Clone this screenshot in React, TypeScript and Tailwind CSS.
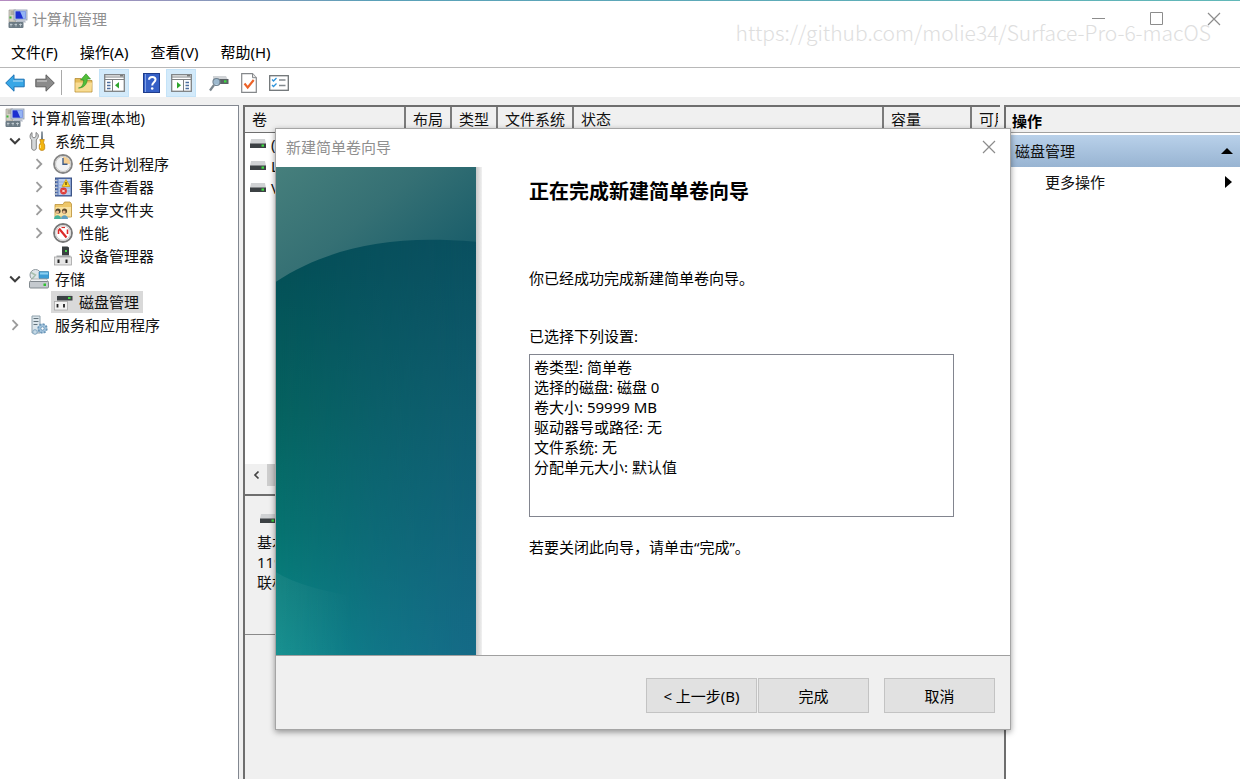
import type { ReactNode } from 'react';

const ComputerIcon = () => (
  <svg width="20" height="20" viewBox="0 0 20 20">
    <path d="M1 1h7v12H1z" fill="#d5d2c6" stroke="#8f8c83" strokeWidth=".6" />
    <path d="M2.5 3h3.5M2.5 5h3.5" stroke="#8a8a80" />
    <rect x="1.5" y="7.5" width="2" height="2" fill="#3fb53a" />
    <rect x="6" y="1" width="13" height="10" fill="#c7d4e6" stroke="#8a97ab" strokeWidth=".8" />
    <rect x="7.5" y="2.3" width="10" height="7.4" fill="#1c2fd0" />
    <path d="M12 2.3h5.5v7.4h-2.2z" fill="#93b4f4" />
    <path d="M9 11.5h8l1 2H8z" fill="#b5bcc7" />
    <rect x=".5" y="13" width="15" height="6" rx="1" fill="#6c7b85" />
    <path d="M2 15.5h2.5M6.500 15.500H9M11 15.500h3M3 14.500v3M8 14.500v3M12.500 14.500v3" stroke="#c9d3d8" strokeWidth=".8" />
  </svg>
);

const ToolsIcon = () => (
  <svg width="20" height="20" viewBox="0 0 20 20">
    <path d="M3 1.500v4l2 1.500 2-1.500v-4c2 1 3 3 2 5-.4 1-1.500 1.800-1.700 2.500V17c0 3-4.600 3-4.600 0V9C.5 7.500.5 3 3 1.500z" fill="#d5d8da" stroke="#777" strokeWidth=".9" />
    <path d="M12.300 0.500h1.400l.3 8h-2z" fill="#6c7a85" />
    <path d="M10.800 8.500h4.500l-.8 3.200 1.200 2.300v3.500c0 2.500-5.400 2.500-5.400 0V14l1.300-2.300z" fill="#f2b50f" stroke="#b77a08" strokeWidth=".7" />
    <path d="M11.500 14v3" stroke="#ffe37c" />
  </svg>
);

const ClockIcon = () => (
  <svg width="20" height="20" viewBox="0 0 20 20">
    <circle cx="10" cy="10" r="9" fill="#f6f4ee" stroke="#858585" strokeWidth="1.800" />
    <circle cx="10" cy="10" r="7.500" fill="#f2f3f4" stroke="#c7c7c7" />
    <path d="M10 10V2.700A7.300 7.300 0 0 1 17.300 10z" fill="#f6cf92" />
    <path d="M10 4v6.300h4.500" fill="none" stroke="#3f5c88" strokeWidth="1.400" />
  </svg>
);

const EventIcon = () => (
  <svg width="20" height="20" viewBox="0 0 20 20">
    <rect x="2.500" y="1" width="16" height="18" fill="#5574b5" stroke="#3d5487" />
    <rect x="5.500" y="2" width="12" height="16" fill="#b9cbeb" />
    <path d="M6 5h11M6 8h11M6 11h11M6 14h11" stroke="#8ba5d6" strokeWidth=".8" />
    <path d="M1.500 3.500h3M1.500 7h3M1.500 10.500h3M1.500 14h3M1.500 17h3" stroke="#c5c9d0" strokeWidth="1.300" />
    <path d="M13 2.500l4 7H9z" fill="#ffd52e" stroke="#c79c0c" strokeWidth=".7" />
    <path d="M13 5v3" stroke="#4a3a00" strokeWidth="1.200" />
    <circle cx="10.500" cy="14" r="3.400" fill="#de3a36" />
    <path d="M9.300 12.800l2.400 2.400m0-2.400l-2.400 2.400" stroke="#fff" />
  </svg>
);

const SharedFolderIcon = () => (
  <svg width="20" height="20" viewBox="0 0 20 20">
    <path d="M2 4.500h8l1.500-2.500H17l1.500 2V17H2z" fill="#eec769" stroke="#bb9238" strokeWidth=".8" />
    <path d="M2.500 7h15.500v9.500H2.500z" fill="#fae2a0" />
    <circle cx="5" cy="11" r="2.600" fill="#4b4436" />
    <circle cx="4.500" cy="12" r="1.600" fill="#eab98c" />
    <circle cx="11.500" cy="11" r="2.600" fill="#5f4a2e" />
    <circle cx="11" cy="12" r="1.600" fill="#eab98c" />
    <path d="M1 19c0-5 7-5 7 0z" fill="#46b39a" />
    <path d="M8 19c0-5 7-5 7 0z" fill="#5f9fc0" />
  </svg>
);

const GaugeIcon = () => (
  <svg width="20" height="20" viewBox="0 0 20 20">
    <circle cx="10" cy="10" r="9" fill="#fff" stroke="#777" strokeWidth="1.800" />
    <circle cx="10" cy="10" r="7.300" fill="none" stroke="#c9c9c9" />
    <path d="M5.500 11V6.500M14.500 11V6.500" fill="none" stroke="#dc2a28" strokeWidth="1.600" />
    <path d="M6 5.500l7.500 9" stroke="#dc2a28" strokeWidth="2.200" />
    <path d="M8.500 4.500h3.500" stroke="#dc2a28" strokeWidth="1.200" />
  </svg>
);

const DeviceIcon = () => (
  <svg width="20" height="20" viewBox="0 0 20 20">
    <path d="M9 .5h5.500l1.500 1v8H9z" fill="#3a3f41" />
    <rect x="12" y="4" width="2" height="2" fill="#45d84a" />
    <path d="M3.500 9.500h14v2h-14z" fill="#a6aaad" />
    <rect x="1.500" y="11" width="17" height="8" fill="#e5e5e5" stroke="#a4a4a4" strokeWidth=".8" />
    <path d="M5.500 13.500v3.500M13.500 13.500v3.500" stroke="#222" strokeWidth="2" />
  </svg>
);

const StorageIcon = () => (
  <svg width="20" height="20" viewBox="0 0 20 20">
    <circle cx="6.500" cy="6" r="5.500" fill="#dfe5e9" stroke="#8d979d" />
    <path d="M2 3.500l4.500 2.500L3 10" fill="none" stroke="#a7bfae" strokeWidth="1.500" />
    <rect x="10" y="2.500" width="10" height="7" rx="1" fill="#3d9dd5" stroke="#347aa1" strokeWidth=".6" />
    <path d="M11 3.500h8v2h-8z" fill="#8dd0f1" />
    <path d="M2.500 10h15l2 3H.5z" fill="#edf0f2" stroke="#999" strokeWidth=".6" />
    <rect x=".5" y="12.500" width="19" height="6.500" rx="1" fill="#c4c9ce" stroke="#777f85" strokeWidth=".9" />
    <rect x="14.500" y="14.500" width="2.500" height="2.500" fill="#2fc12f" />
  </svg>
);

const DiskMgmtIcon = () => (
  <svg width="20" height="20" viewBox="0 0 20 20">
    <path d="M6 2.500h12l1.500 2H4.500z" fill="#c7c9cb" />
    <rect x="4" y="4" width="15.500" height="4.500" fill="#3c4144" />
    <rect x="15" y="5" width="2.500" height="2" fill="#41dc43" />
    <rect x="1.500" y="9.500" width="13" height="8.500" fill="#f3f3f3" stroke="#a8a8a8" strokeWidth=".8" />
    <path d="M4.500 12v3.500M11 12v3.500" stroke="#222" strokeWidth="1.800" />
  </svg>
);

const ServicesIcon = () => (
  <svg width="20" height="20" viewBox="0 0 20 20">
    <path d="M3 1h8v17H3z" fill="#dce6ec" stroke="#8fa1ac" />
    <path d="M4.500 3.500h5M4.500 6.500h5M4.500 9.500h4" stroke="#62727b" strokeWidth="1.200" />
    <circle cx="13.500" cy="13.500" r="4.300" fill="#a6c7e0" stroke="#6a96b8" strokeWidth="1.800" strokeDasharray="2.200 1.100" />
    <circle cx="13.500" cy="13.500" r="1.700" fill="#fff" stroke="#6a96b8" />
    <circle cx="6" cy="17" r="2.300" fill="#c5d9e6" stroke="#7fa3bd" />
  </svg>
);

const DriveIcon = () => (
  <svg width="16" height="10" viewBox="0 0 16 10">
    <path d="M1 0h14l1 5H0z" fill="#d0d2d4" />
    <rect y="4.500" width="16" height="4.500" fill="#3c4144" />
    <rect x="11.500" y="5.500" width="2.500" height="2.200" fill="#3ddc41" />
  </svg>
);

const ArrowIcon = ({ flip = false }: { flip?: boolean }) => (
  <svg width="20" height="18" viewBox="0 0 20 18">
    {flip ? (
      <path d="M19.300 9L11 .8v4.400H.8v7.600H11v4.400z" fill="#8b8b8b" stroke="#5e5e5e" strokeWidth="1" />
    ) : (
      <path d="M.7 9L9 .8v4.400h10.200v7.600H9v4.400z" fill="#38a7e6" stroke="#1b71b4" strokeWidth="1" />
    )}
    <path d={flip ? 'M2 7h10' : 'M8 7h10'} stroke="#fff" strokeOpacity=".45" strokeWidth="1.500" />
  </svg>
);

const FolderUpIcon = () => (
  <svg width="20" height="20" viewBox="0 0 20 20">
    <path d="M1 5.500h6l1.500 2H18V19H1z" fill="#e6bd5b" stroke="#b48d35" strokeWidth=".8" />
    <path d="M1.500 9.500H18l-.5 9h-16z" fill="#f8dc93" />
    <path d="M4.500 15c3-.5 5-3 5.200-8H6.500L12 .8 16.500 6h-3.200c-.3 6-4 9-8.800 9z" fill="#52bf3a" stroke="#2c8a20" strokeWidth=".6" />
  </svg>
);

const PaneIcon = ({ flip = false }: { flip?: boolean }) => (
  <svg width="21" height="18" viewBox="0 0 21 18">
    <rect x=".7" y=".7" width="19.600" height="16.600" fill="#fff" stroke="#7d8083" strokeWidth="1.300" />
    <path d="M1 3h19M1 5.500h19" stroke="#7d8083" />
    <path d="M16 1.800h3" stroke="#555" />
    {flip ? (
      <>
        <path d="M12.500 6v11" stroke="#7d8083" />
        <path d="M14.500 8.500H18M14.500 11.500H18M14.500 14.500H18" stroke="#4d6e9e" strokeWidth="1.300" />
        <path d="M6 8v6.500l4-3.250z" fill="#2ea52c" />
      </>
    ) : (
      <>
        <path d="M8.500 6v11" stroke="#7d8083" />
        <path d="M3 8.500h3.500M3 11.500h3.500M3 14.500h3.500" stroke="#4d6e9e" strokeWidth="1.300" />
        <path d="M15 8v6.500l-4-3.250z" fill="#2ea52c" />
      </>
    )}
  </svg>
);

const HelpIcon = () => (
  <svg width="17" height="20" viewBox="0 0 17 20">
    <rect x=".5" y=".5" width="16" height="19" fill="#3560c6" stroke="#1e3c8c" />
    <path d="M2.500 1v18" stroke="#7f9fe6" />
    <path d="M6 6.800c0-4 6.500-3.700 6.500-.3 0 2.700-3.300 2.700-3.300 6" fill="none" stroke="#fff" strokeWidth="2" />
    <circle cx="9.200" cy="15.500" r="1.300" fill="#fff" />
  </svg>
);

const RescanIcon = () => (
  <svg width="20" height="18" viewBox="0 0 20 18">
    <path d="M4 2h13l2 4H4z" fill="#d0d3d6" />
    <rect x="5" y="5" width="14.500" height="5" fill="#5b6165" />
    <rect x="15" y="6.300" width="2.500" height="2.200" fill="#3ddc41" />
    <circle cx="7.500" cy="8" r="3.500" fill="#a9c9e0" fillOpacity=".85" stroke="#708290" strokeWidth="1.200" />
    <path d="M5 11L1 16.500" stroke="#7a868e" strokeWidth="2.200" />
  </svg>
);

const CheckDocIcon = () => (
  <svg width="16" height="20" viewBox="0 0 16 20">
    <path d="M.7.700h10.800l3.800 4v14.600H.7z" fill="#fff" stroke="#85888b" strokeWidth="1.200" />
    <path d="M11.500.7v4h3.800" fill="#e5e5e5" stroke="#85888b" />
    <path d="M3.500 10.500l3.200 4 6-7.500" fill="none" stroke="#ec6228" strokeWidth="2.100" />
  </svg>
);

const ListIcon = () => (
  <svg width="20" height="16" viewBox="0 0 20 16">
    <rect x=".7" y=".7" width="18.600" height="14.600" fill="#fff" stroke="#6f7477" strokeWidth="1.300" />
    <path d="M3 4.500l1.500 1.500L7.500 3M3 10l1.500 1.500L7.500 8.500" fill="none" stroke="#2d93da" strokeWidth="1.300" />
    <path d="M10 5h6.500M10 10.500h6.500" stroke="#82898e" strokeWidth="1.300" />
  </svg>
);

const Chevron = ({ open = false }: { open?: boolean }) => (
  <svg width="12" height="12" viewBox="0 0 12 12" fill="none">
    {open ? (
      <path d="M1.200 3.500L6 8.300l4.800-4.800" stroke="#3d3d3d" strokeWidth="2" />
    ) : (
      <path d="M3.500 1.200L8.300 6l-4.800 4.800" stroke="#9b9b9b" strokeWidth="1.800" />
    )}
  </svg>
);

const CloseGlyph = () => (
  <svg width="14" height="14" viewBox="0 0 14 14">
    <path d="M1 1l12 12M13 1L1 13" stroke="#8c8c8c" strokeWidth="1.200" />
  </svg>
);

const ToolButton = ({ label, active = false, children }: { label: string; active?: boolean; children: ReactNode }) => (
  <button
    type="button"
    aria-label={label}
    className={`flex h-7 w-[30px] items-center justify-center ${active ? 'border border-[#c4e3f8] bg-[#d3eafa]' : ''}`}
  >
    {children}
  </button>
);

const TreeItem = ({
  label,
  icon,
  level = 0,
  state = 'leaf',
  selected = false,
}: {
  label: string;
  icon: ReactNode;
  level?: number;
  state?: 'open' | 'closed' | 'leaf';
  selected?: boolean;
}) => (
  <li className={`flex h-[23px] items-center ${level === 2 ? 'ml-6' : ''}`}>
    {level > 0 && (
      <span className="flex w-6 justify-center">{state !== 'leaf' && <Chevron open={state === 'open'} />}</span>
    )}
    <button type="button" className={`flex h-[22px] items-center gap-1.5 pr-1 pl-0.5 ${selected ? 'bg-[#d9d9d9]' : ''}`}>
      {icon}
      {label}
    </button>
  </li>
);

const HeaderCell = ({ children }: { children: ReactNode }) => (
  <th className="overflow-hidden border-r-2 border-[#7b7b7b] pb-0.5 pl-[7px] text-left font-normal whitespace-nowrap">
    {children}
  </th>
);

const DialogButton = ({ children }: { children: ReactNode }) => (
  <button type="button" className="h-[35px] w-[111px] border border-[#c3c3c3] bg-[#e1e1e1]">
    {children}
  </button>
);

const Banner = () => (
  <svg className="h-full w-[200px]" viewBox="0 0 200 489" preserveAspectRatio="none">
    <defs>
      <linearGradient id="right" x1="0" y1="0" x2="0" y2="1">
        <stop offset=".15" stopColor="#0a5060" />
        <stop offset=".5" stopColor="#0f5d70" />
        <stop offset="1" stopColor="#156a87" />
      </linearGradient>
      <linearGradient id="left" x1="0" y1="0" x2="0" y2="1">
        <stop offset=".2" stopColor="#034f56" />
        <stop offset=".5" stopColor="#05625f" />
        <stop offset=".75" stopColor="#067370" />
        <stop offset="1" stopColor="#0a8a89" />
      </linearGradient>
      <linearGradient id="fade" x1="0" y1="0" x2="1" y2="0">
        <stop offset="0" stopColor="#fff" />
        <stop offset=".5" stopColor="#666" />
        <stop offset="1" stopColor="#000" />
      </linearGradient>
      <mask id="leftSide">
        <rect width="200" height="489" fill="url(#fade)" />
      </mask>
      <linearGradient id="sky" x1="0" y1="0" x2="1" y2=".7">
        <stop offset="0" stopColor="#467f7c" />
        <stop offset=".5" stopColor="#357074" />
        <stop offset="1" stopColor="#195d6a" />
      </linearGradient>
      <linearGradient id="shine" x1="0" y1="0" x2="1" y2="0">
        <stop offset="0" stopColor="#fff" stopOpacity=".06" />
        <stop offset="1" stopColor="#fff" stopOpacity="0" />
      </linearGradient>
    </defs>
    <rect width="200" height="489" fill="url(#right)" />
    <rect width="200" height="489" fill="url(#left)" mask="url(#leftSide)" />
    <path d="M0 406c20 12 45 18 75 24v59H0z" fill="url(#shine)" />
    <path d="M0 0h200v75c-17-1.500-32-2-46-2-58 0-110 13-154 42z" fill="url(#sky)" />
  </svg>
);

const settings = ['卷类型: 简单卷', '选择的磁盘: 磁盘 0', '卷大小: 59999 MB', '驱动器号或路径: 无', '文件系统: 无', '分配单元大小: 默认值'];

const WizardDialog = () => (
  <div
    role="dialog"
    aria-labelledby="wizard-title"
    className="absolute top-[128px] left-[275px] flex h-[602px] w-[736px] flex-col border border-[#a5a5a5] bg-white shadow-[0_2px_6px_rgba(0,0,0,0.4)]"
  >
    <div className="flex h-[38px] shrink-0 items-center justify-between pr-[14px] pb-0.5 pl-[10px] text-[#8f8f8f]">
      <span id="wizard-title">新建简单卷向导</span>
      <button type="button" aria-label="关闭">
        <CloseGlyph />
      </button>
    </div>
    <div className="flex min-h-0 flex-1">
      <Banner />
      <div className="w-1.5 bg-linear-to-r from-[#c9c9c9] to-[#f1f1f1]" />
      <div className="flex flex-1 flex-col pr-14 pl-[47px] text-black">
        <h1 className="mt-2.5 text-[20px] leading-[30px] font-bold">正在完成新建简单卷向导</h1>
        <p className="mt-[61px]">你已经成功完成新建简单卷向导。</p>
        <label htmlFor="settings" className="mt-[38px]">
          已选择下列设置:
        </label>
        <textarea
          id="settings"
          readOnly
          className="mt-2 block h-[163px] w-full resize-none overflow-hidden border border-[#82858f] px-1 py-0.5 leading-5 outline-none"
          value={settings.join('\n')}
        />
        <p className="mt-5">若要关闭此向导，请单击“完成”。</p>
      </div>
    </div>
    <div className="flex h-[74px] shrink-0 items-center justify-end border-t border-[#a0a0a0] bg-[#f0f0f0] pt-1.5 pr-[15px] text-black">
      <DialogButton>&lt; 上一步(B)</DialogButton>
      <span className="w-px" />
      <DialogButton>完成</DialogButton>
      <span className="w-[15px]" />
      <DialogButton>取消</DialogButton>
    </div>
  </div>
);

const App = () => {
  return (
    <div className="relative flex min-h-screen flex-col overflow-hidden bg-[#f0f0f0] font-['Noto_Sans','Noto_Sans_CJK_SC',sans-serif] text-[15px] leading-5 text-[#111]">
      <div className="h-px bg-linear-to-r from-[#b58ac0] via-[#5aa0b8] via-30% to-[#62b8b8]" />
      <header className="flex h-[35px] items-center bg-white pl-2">
        <ComputerIcon />
        <span className="ml-1 flex-1 text-[#8f8f8f]">计算机管理</span>
        <div className="flex gap-1.5">
          <button type="button" aria-label="最小化" className="flex h-8 w-[52px] items-center justify-center">
            <svg width="13" height="13"><path d="M0 6.500h13" stroke="#8c8c8c" /></svg>
          </button>
          <button type="button" aria-label="最大化" className="flex h-8 w-[52px] items-center justify-center">
            <svg width="13" height="13"><path d="M.5.5h12v12H.5z" fill="none" stroke="#8c8c8c" /></svg>
          </button>
          <button type="button" aria-label="关闭" className="flex h-8 w-[52px] items-center justify-center">
            <CloseGlyph />
          </button>
        </div>
      </header>

      <nav className="flex h-8 items-center gap-[22px] border-b border-[#b8b8b8] bg-white pl-[11px] text-black">
        <button type="button">文件(F)</button>
        <button type="button">操作(A)</button>
        <button type="button">查看(V)</button>
        <button type="button">帮助(H)</button>
      </nav>

      <div className="flex h-[29px] items-center bg-white">
        <ToolButton label="后退"><ArrowIcon /></ToolButton>
        <ToolButton label="前进"><ArrowIcon flip /></ToolButton>
        <span className="mr-[7px] ml-px h-[25px] w-px bg-[#a9a9a9]" />
        <ToolButton label="上移"><FolderUpIcon /></ToolButton>
        <ToolButton label="显示控制台树" active><PaneIcon /></ToolButton>
        <span className="w-[7px]" />
        <ToolButton label="帮助"><HelpIcon /></ToolButton>
        <ToolButton label="显示操作窗格" active><PaneIcon flip /></ToolButton>
        <span className="w-2" />
        <ToolButton label="重新扫描"><RescanIcon /></ToolButton>
        <ToolButton label="属性"><CheckDocIcon /></ToolButton>
        <ToolButton label="列表"><ListIcon /></ToolButton>
      </div>

      <main className="flex flex-1 gap-1 pt-2">
        <aside className="w-[239px] shrink-0 border-t border-r border-[#828790] bg-white pl-[3px]">
          <ul>
            <TreeItem label="计算机管理(本地)" icon={<ComputerIcon />} />
            <TreeItem level={1} state="open" label="系统工具" icon={<ToolsIcon />} />
            <TreeItem level={2} state="closed" label="任务计划程序" icon={<ClockIcon />} />
            <TreeItem level={2} state="closed" label="事件查看器" icon={<EventIcon />} />
            <TreeItem level={2} state="closed" label="共享文件夹" icon={<SharedFolderIcon />} />
            <TreeItem level={2} state="closed" label="性能" icon={<GaugeIcon />} />
            <TreeItem level={2} label="设备管理器" icon={<DeviceIcon />} />
            <TreeItem level={1} state="open" label="存储" icon={<StorageIcon />} />
            <TreeItem level={2} label="磁盘管理" icon={<DiskMgmtIcon />} selected />
            <TreeItem level={1} state="closed" label="服务和应用程序" icon={<ServicesIcon />} />
          </ul>
        </aside>

        <div className="flex min-w-0 flex-1 flex-col border-t-2 border-l-2 border-[#6e6e6e]">
          <section className="flex h-[389px] flex-col overflow-hidden border-b-2 border-[#6e6e6e] bg-[#f0f0f0]">
            <div className="mr-0.5 flex-1 overflow-hidden bg-white">
              <table className="w-[820px] table-fixed border-separate border-spacing-0">
                <colgroup>
                  <col className="w-[161px]" />
                  <col className="w-[46px]" />
                  <col className="w-[46px]" />
                  <col className="w-[76px]" />
                  <col className="w-[310px]" />
                  <col className="w-[88px]" />
                  <col className="w-[93px]" />
                </colgroup>
                <thead className="bg-[#f0f0f0]">
                  <tr className="h-[26px] shadow-[inset_0_-1px_0_#6e6e6e]">
                    <HeaderCell>卷</HeaderCell>
                    <HeaderCell>布局</HeaderCell>
                    <HeaderCell>类型</HeaderCell>
                    <HeaderCell>文件系统</HeaderCell>
                    <HeaderCell>状态</HeaderCell>
                    <HeaderCell>容量</HeaderCell>
                    <HeaderCell>可用空间</HeaderCell>
                  </tr>
                </thead>
                <tbody>
                  {['(C:)', 'L', 'V'].map((name) => (
                    <tr key={name} className="h-[22px]">
                      <td className="pl-[5px]">
                        <span className="flex items-center gap-[5px]">
                          <DriveIcon />
                          {name}
                        </span>
                      </td>
                    </tr>
                  ))}
                </tbody>
              </table>
            </div>
            <div className="mb-2 flex h-[22px]">
              <button type="button" aria-label="向左滚动" className="flex w-[22px] items-center justify-center">
                <svg width="7" height="10" viewBox="0 0 7 10"><path d="M5.500 1.500L2 5l3.500 3.500" fill="none" stroke="#444" strokeWidth="1.700" /></svg>
              </button>
              <div className="w-[600px] bg-[#cdcdcd]" />
            </div>
          </section>
          <section className="h-[139px] border-b border-[#8a8a8a] pt-[18px] pl-3">
            <div className="mb-2 pl-[3px]"><DriveIcon /></div>
            <p>基本</p>
            <p>119 GB</p>
            <p>联机</p>
          </section>
        </div>

        <aside className="w-[236px] shrink-0 border-t-2 border-l-2 border-[#6e6e6e] bg-white">
          <h2 className="h-[26px] border-b border-[#a0a0a0] bg-[#f0f0f0] pl-1.5 leading-7 font-bold text-black">操作</h2>
          <button
            type="button"
            className="mt-0.5 flex h-8 w-full items-center justify-between bg-linear-to-b from-[#b9d1ea] to-[#98b4d2] pr-[7px] pl-[9px]"
          >
            磁盘管理
            <svg width="12" height="6"><path d="M0 6L6 0l6 6z" fill="#000" /></svg>
          </button>
          <button type="button" className="flex h-[30px] w-full items-center justify-between pr-2 pl-[39px]">
            更多操作
            <svg width="7" height="12"><path d="M0 0l7 6-7 6z" fill="#000" /></svg>
          </button>
        </aside>
      </main>

      <WizardDialog />

      <p className="pointer-events-none absolute top-[17px] right-[29px] font-['Noto_Sans_CJK_SC',sans-serif] text-[21px] leading-[30px] font-light text-[#dedede]">
        https://github.com/molie34/Surface-Pro-6-macOS
      </p>
    </div>
  );
};

export default App;
